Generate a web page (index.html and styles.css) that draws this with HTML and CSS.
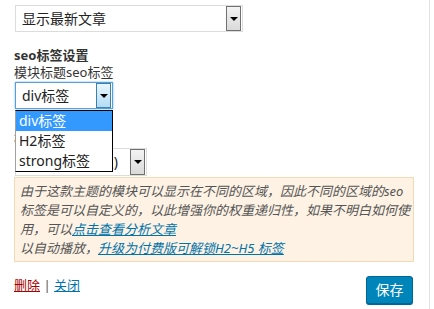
FILE: index.html
```html
<!DOCTYPE html>
<html lang="zh-CN">
<head>
<meta charset="utf-8">
<title>Widget</title>
<link rel="stylesheet" href="styles.css">
</head>
<body>
<div class="wrap">
  <div class="select select-wide">
    <span class="select-text">显示最新文章</span>
    <span class="select-btn"><i class="tri"></i></span>
  </div>

  <div class="group">
    <div class="title">seo标签设置</div>
    <div class="label">模块标题seo标签</div>
    <div class="select-holder">
      <div class="select select-small focused">
        <span class="select-text">div标签</span>
        <span class="select-btn"><i class="tri"></i></span>
      </div>
      <ul class="dropdown">
        <li class="active">div标签</li>
        <li>H2标签</li>
        <li>strong标签</li>
      </ul>
    </div>
  </div>

  <div class="group group-tight">
    <div class="title">自动播放设置</div>
    <div class="label">模块自动播放</div>
    <div class="select select-mid">
      <span class="select-text">显示方式 (默认)</span>
      <span class="select-btn"><i class="tri"></i></span>
    </div>
  </div>

  <div class="notice">
    由于这款主题的模块可以显示在不同的区域，因此不同的区域的seo标签是可以自定义的，以此增强你的权重递归性，如果不明白如何使用，可以<a href="#">点击查看分析文章</a><br>
    以自动播放，<a href="#">升级为付费版可解锁H2~H5 标签</a>
  </div>

  <div class="actions">
    <div class="links"><a class="del" href="#">删除</a> <span class="sep">|</span> <a class="close" href="#">关闭</a></div>
    <button class="save" type="button">保存</button>
  </div>
</div>
</body>
</html>
```

FILE: styles.css
```css
html, body {
  margin: 0;
  padding: 0;
  background: #fff;
}
body {
  font-family: "Noto Sans", "Noto Sans CJK SC", sans-serif;
  color: #333;
  font-size: 13px;
}
.wrap {
  width: 400px;
  height: 309px;
  padding: 5px 15px 0 14px;
  box-sizing: border-box;
  width: 430px;
  border-right: 1px solid #e2e2e2;
}
.select {
  position: relative;
  box-sizing: border-box;
  height: 27px;
  margin-left: 1px;
  border: 1px solid #dcdcdc;
  background: #fff;
  display: flex;
  align-items: center;
  font-size: 14px;
  color: #222;
}
.select-wide { width: 228px; }
.select-small { width: 98px; }
.select-mid { width: 132px; height: 28px; }
.select-text {
  flex: 1;
  padding-left: 6px;
  line-height: 20px;
  white-space: nowrap;
  overflow: hidden;
}
.select-btn {
  width: 15px;
  align-self: stretch;
  margin: 0 1px 0 0;
  box-sizing: border-box;
  border: 1px solid #707070;
  background: linear-gradient(#f3f3f3, #dadada);
  display: flex;
  align-items: center;
  justify-content: center;
}
.tri {
  width: 0;
  height: 0;
  border-left: 4px solid transparent;
  border-right: 4px solid transparent;
  border-top: 4px solid #000;
}
.focused {
  border-color: #5b9dd9;
  box-shadow: 0 0 2px rgba(30, 140, 190, 0.6);
}
.focused .select-btn {
  border-color: #3c7fb1;
  background: linear-gradient(#eaf6fd, #b3dcf5);
}
.group { margin-top: 15px; }
.group-tight { margin-top: 4px; }
.title {
  font-weight: bold;
  line-height: 17px;
  color: #333;
}
.label {
  line-height: 17px;
  color: #333;
  margin-bottom: 1px;
}
.select-holder { position: relative; }
.dropdown {
  position: absolute;
  left: 1px;
  top: 28px;
  z-index: 5;
  width: 98px;
  margin: 0;
  padding: 0;
  list-style: none;
  box-sizing: border-box;
  border: 1px solid #000;
  border-left-color: #a0a0a0;
  background: #fff;
  font-size: 14px;
  color: #222;
}
.dropdown li {
  height: 20px;
  line-height: 20px;
  padding-left: 3px;
}
.dropdown li.active {
  background: #3399ff;
  color: #fff;
}
.notice {
  margin-top: 1px;
  box-sizing: border-box;
  width: 400px;
  border: 1px solid #f4d9b5;
  background: #fdf2e4;
  padding: 4px 3px 3px 5px;
  font-style: italic;
  line-height: 19px;
  color: #555;
  font-size: 13px;
}
.notice a {
  color: #0073aa;
  text-decoration: underline;
}
.actions {
  display: flex;
  justify-content: space-between;
  align-items: flex-start;
  width: 400px;
  margin-top: 14px;
}
.links {
  line-height: 17px;
  font-size: 13px;
  padding-top: 1px;
}
.links a { text-decoration: underline; }
.del { color: #a00; }
.close { color: #0073aa; }
.sep { color: #555; }
.save {
  width: 47px;
  height: 28px;
  margin-right: 1px;
  padding: 0;
  border: 1px solid #006799;
  border-radius: 3px;
  background: #0085ba;
  box-shadow: 0 1px 0 #006799;
  color: #fff;
  font-family: "Noto Sans", "Noto Sans CJK SC", sans-serif;
  font-size: 14px;
  line-height: 26px;
}
```
